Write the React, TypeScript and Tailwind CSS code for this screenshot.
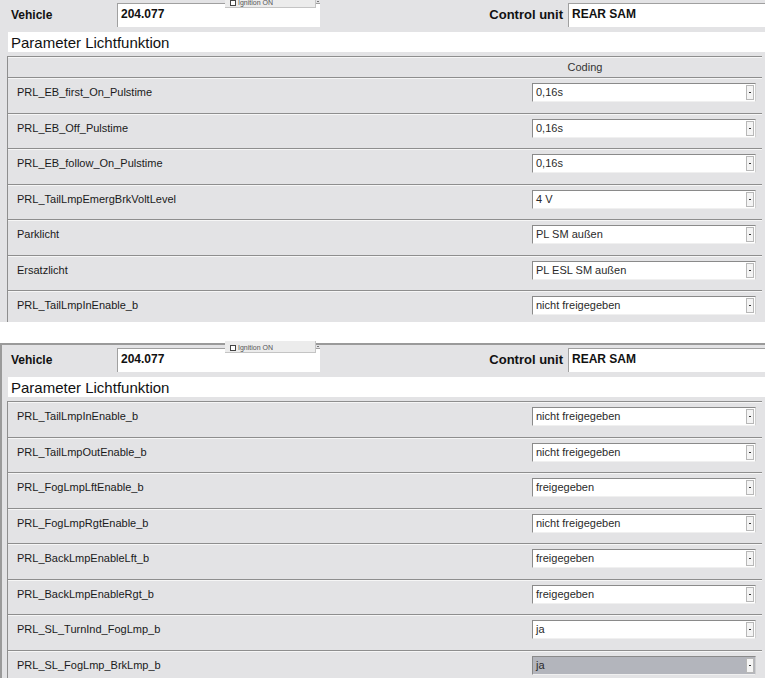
import React from "react";

type Row = { label: string; value: string; selected?: boolean };

const rows1: Row[] = [
  { label: "PRL_EB_first_On_Pulstime", value: "0,16s" },
  { label: "PRL_EB_Off_Pulstime", value: "0,16s" },
  { label: "PRL_EB_follow_On_Pulstime", value: "0,16s" },
  { label: "PRL_TailLmpEmergBrkVoltLevel", value: "4 V" },
  { label: "Parklicht", value: "PL SM außen" },
  { label: "Ersatzlicht", value: "PL ESL SM außen" },
  { label: "PRL_TailLmpInEnable_b", value: "nicht freigegeben" },
];

const rows2: Row[] = [
  { label: "PRL_TailLmpInEnable_b", value: "nicht freigegeben" },
  { label: "PRL_TailLmpOutEnable_b", value: "nicht freigegeben" },
  { label: "PRL_FogLmpLftEnable_b", value: "freigegeben" },
  { label: "PRL_FogLmpRgtEnable_b", value: "nicht freigegeben" },
  { label: "PRL_BackLmpEnableLft_b", value: "freigegeben" },
  { label: "PRL_BackLmpEnableRgt_b", value: "freigegeben" },
  { label: "PRL_SL_TurnInd_FogLmp_b", value: "ja" },
  { label: "PRL_SL_FogLmp_BrkLmp_b", value: "ja", selected: true },
];

function Select({ value, selected }: { value: string; selected?: boolean }) {
  return (
    <div
      className={`ml-auto mr-[6px] flex h-[19px] w-[224px] items-center border border-t-[#8a8a8a] border-l-[#8a8a8a] border-r-[#d0d0d0] border-b-[#f0f0f0] ${
        selected ? "bg-[#b3b5bc]" : "bg-white"
      }`}
    >
      <span className="flex-1 pl-[3px] text-[11px] leading-none text-[#2a2a2a]">{value}</span>
      <div className="mr-[1px] flex h-[15px] w-[8px] items-center justify-center border border-[#b8b8b8] bg-[#f4f4f4]">
        <div className="h-[1px] w-[2px] bg-[#333]" />
      </div>
    </div>
  );
}

function TableRow({ row }: { row: Row }) {
  return (
    <div className="flex h-[35.5px] items-center border-b border-[#8e8e8e] pb-[5px] shadow-[inset_0_1px_0_#f6f6f6]">
      <span className="pl-[9px] text-[11px] leading-none text-[#1a1a1a]">{row.label}</span>
      <Select value={row.value} selected={row.selected} />
    </div>
  );
}

function Ignition() {
  return (
    <div className="absolute left-[225px] top-[-4px] flex h-[12px] w-[91px] items-end border-r border-b border-[#c4c4c4] bg-[#ececec] pl-[5px] pb-[1px]">
      <span className="mr-[2px] inline-block h-[6px] w-[6px] border border-[#444] bg-white" />
      <span className="text-[7px] leading-none text-[#555]">Ignition ON</span>
      <span className="absolute right-[-4px] top-[5px] h-[1px] w-[2px] bg-[#777]" />
    </div>
  );
}

function Panel({
  rows,
  header,
  className,
}: {
  rows: Row[];
  header?: boolean;
  className: string;
}) {
  return (
    <div className={`relative bg-[#e3e3e5] ${className}`}>
      <div className="flex h-[30px] items-start pt-[3px]">
        <span className="w-[117px] pl-[11px] pt-[6px] text-[12px] font-bold leading-none text-[#111]">
          Vehicle
        </span>
        <div className="h-[24px] w-[203px] border-l border-t border-[#a0a0a0] bg-white pl-[3px] pt-[4px] text-[12px] font-bold leading-none text-[#111]">
          204.077
        </div>
        <span className="ml-auto pr-[5px] pt-[5px] text-[13px] font-bold leading-none text-[#111]">
          Control unit
        </span>
        <div className="h-[24px] w-[197px] border-l border-t border-[#a0a0a0] bg-white pl-[3px] pt-[4px] text-[12px] font-bold leading-none text-[#111]">
          REAR SAM
        </div>
      </div>
      <Ignition />
      <div className="ml-[8px] mt-[2px] flex h-[20px] items-center bg-white pl-[3px] text-[15px] leading-none text-[#111]">
        Parameter Lichtfunktion
      </div>
      <div className="ml-[7px] mt-[4px] w-[755px] border-l border-t border-[#8e8e8e]">
        {header && (
          <div className="flex h-[21px] border-b border-[#8e8e8e] shadow-[inset_0_1px_0_#f6f6f6]">
            <div className="flex-1" />
            <div className="flex w-[354px] items-center justify-center text-[11px] leading-none text-[#333]">
              Coding
            </div>
          </div>
        )}
        {rows.map((r, i) => (
          <TableRow key={i} row={r} />
        ))}
      </div>
    </div>
  );
}

export default function App() {
  return (
    <div
      className="h-[678px] w-[765px] overflow-hidden bg-white"
      style={{ fontFamily: '"Liberation Sans", Arial, sans-serif' }}
    >
      <Panel rows={rows1} header className="h-[322px] overflow-hidden" />
      <div className="h-[21px]" />
      <Panel
        rows={rows2}
        className="h-[335px] border-t-2 border-[#9a9a9a] shadow-[inset_2px_0_0_#9a9a9a]"
      />
    </div>
  );
}
